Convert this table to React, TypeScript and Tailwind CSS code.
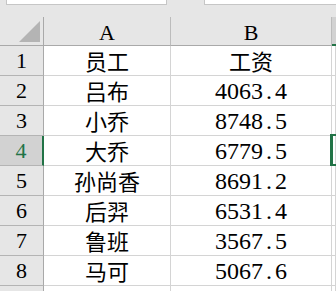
import React from 'react';

// 员工工资表 (表格截图)
type Row = { name: string; pay: string };

const rows: Row[] = [
  { name: '吕布', pay: '4063.4' },
  { name: '小乔', pay: '8748.5' },
  { name: '大乔', pay: '6779.5' },
  { name: '孙尚香', pay: '8691.2' },
  { name: '后羿', pay: '6531.4' },
  { name: '鲁班', pay: '3567.5' },
  { name: '马可', pay: '5067.6' },
];

const serif = "font-['Liberation_Serif','Noto_Sans_CJK_SC',serif]";
const cjk = "font-['Noto_Sans_CJK_SC',sans-serif]";

// 数字按半角等宽显示
function Mono({ text }: { text: string }) {
  return (
    <span className="flex">
      {text.split('').map((c, i) => (
        <span key={i} className="inline-block w-[12px] text-center">
          {c}
        </span>
      ))}
    </span>
  );
}

function RowHead({ n, active }: { n?: number; active?: boolean }) {
  return (
    <div
      className={`h-[30px] flex items-center justify-center border-b border-[#b4b4b4] text-[22px] ${serif} ${
        active
          ? 'bg-[#d2d2d2] text-[#217346] border-r-2 border-r-[#217346]'
          : 'bg-[#e6e6e6] text-black border-r border-r-[#a9a9a9]'
      }`}
    >
      {n}
    </div>
  );
}

function Cell({ children, className = '' }: { children?: React.ReactNode; className?: string }) {
  return (
    <div
      className={`h-[30px] flex items-center justify-center border-b border-r border-[#d4d4d4] text-black ${className}`}
    >
      {children}
    </div>
  );
}

export default function App() {
  return (
    <div className="w-[336px] h-[291px] overflow-hidden bg-white relative">
      {/* 编辑栏下沿 */}
      <div className="h-[17px] bg-[#e6e6e6] flex items-start">
        <div className="ml-[6px] w-[161px] h-[5px] bg-white border-x border-b border-[#c6c6c6]" />
        <div className="ml-[37px] flex-1 h-[5px] bg-white border-l border-b border-[#c6c6c6]" />
      </div>

      <div className="grid grid-cols-[44px_127px_161px_1fr]">
        {/* 列标题 */}
        <div className="h-[29px] bg-[#e6e6e6] border-b border-r border-[#a9a9a9] flex items-end justify-end pr-[3px] pb-[3px]">
          <svg width="21" height="21" viewBox="0 0 21 21">
            <polygon points="21,0 21,21 0,21" fill="#b4b4b4" />
          </svg>
        </div>
        <div className={`h-[29px] bg-[#e6e6e6] border-b border-b-[#a9a9a9] border-r border-r-[#bcbcbc] flex items-center justify-center pt-[3px] text-[22px] text-black ${serif}`}>
          A
        </div>
        <div className={`h-[29px] bg-[#e6e6e6] border-b border-b-[#a9a9a9] border-r border-r-[#bcbcbc] flex items-center justify-center pt-[3px] text-[22px] text-black ${serif}`}>
          B
        </div>
        <div className="h-[29px] bg-[#d2d2d2] border-b-2 border-[#217346]" />

        {/* 表头行 */}
        <RowHead n={1} />
        <Cell className={`text-[22px] ${cjk}`}>员工</Cell>
        <Cell className={`text-[22px] ${cjk}`}>工资</Cell>
        <Cell />

        {rows.map((r, i) => (
          <React.Fragment key={r.name}>
            <RowHead n={i + 2} active={i + 2 === 4} />
            <Cell className={`text-[22px] ${cjk}`}>{r.name}</Cell>
            <Cell className={`text-[24px] ${serif}`}>
              <Mono text={r.pay} />
            </Cell>
            <Cell />
          </React.Fragment>
        ))}

        {/* 下一行仅露出上沿 */}
        <RowHead />
        <Cell />
        <Cell />
        <Cell />
      </div>

      {/* 选中单元格 C4 */}
      <div className="absolute left-[330px] top-[134px] w-[12px] h-[32px] border-l-[3px] border-y-2 border-[#217346]" />
    </div>
  );
}
